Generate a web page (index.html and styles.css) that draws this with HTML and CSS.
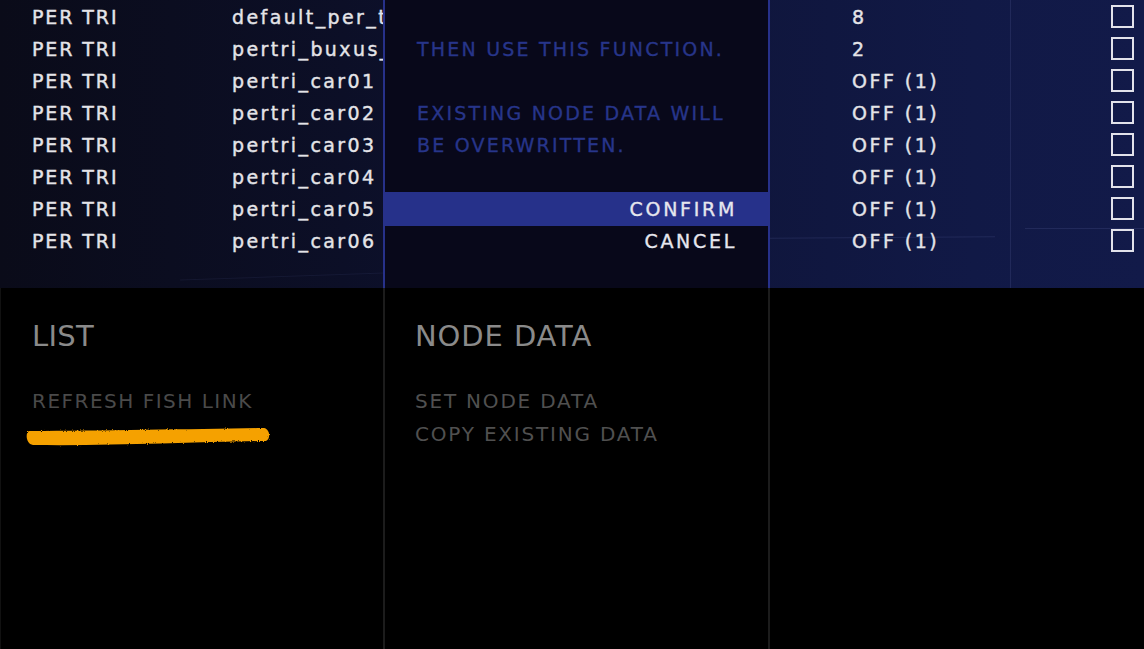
FILE: index.html
```html
<!DOCTYPE html>
<html>
<head>
<meta charset="utf-8">
<link rel="stylesheet" href="styles.css">
</head>
<body>
<div class="screen">
  <section class="top">
    <div class="deco deco-v"></div>
    <div class="deco deco-h1"></div>
    <div class="deco deco-h2"></div>
    <div class="deco deco-h3"></div>
    <div class="table">
      <div class="row"><span class="c1">PER TRI</span><span class="c2">default_per_tri</span><span class="c3">8</span><span class="box"></span></div>
      <div class="row"><span class="c1">PER TRI</span><span class="c2">pertri_buxus_01</span><span class="c3">2</span><span class="box"></span></div>
      <div class="row"><span class="c1">PER TRI</span><span class="c2">pertri_car01</span><span class="c3">OFF (1)</span><span class="box"></span></div>
      <div class="row"><span class="c1">PER TRI</span><span class="c2">pertri_car02</span><span class="c3">OFF (1)</span><span class="box"></span></div>
      <div class="row"><span class="c1">PER TRI</span><span class="c2">pertri_car03</span><span class="c3">OFF (1)</span><span class="box"></span></div>
      <div class="row"><span class="c1">PER TRI</span><span class="c2">pertri_car04</span><span class="c3">OFF (1)</span><span class="box"></span></div>
      <div class="row"><span class="c1">PER TRI</span><span class="c2">pertri_car05</span><span class="c3">OFF (1)</span><span class="box"></span></div>
      <div class="row"><span class="c1">PER TRI</span><span class="c2">pertri_car06</span><span class="c3">OFF (1)</span><span class="box"></span></div>
    </div>
    <div class="dialog">
      <div class="msg">
        <p>THEN USE THIS FUNCTION.</p>
        <p>&nbsp;</p>
        <p>EXISTING NODE DATA WILL</p>
        <p>BE OVERWRITTEN.</p>
      </div>
      <div class="opt confirm">CONFIRM</div>
      <div class="opt cancel">CANCEL</div>
    </div>
  </section>
  <section class="bottom">
    <div class="col">
      <h2 class="title">LIST</h2>
      <div class="items">
        <div class="item">REFRESH FISH LINK</div>
      </div>
      <svg class="stroke" width="250" height="22" viewBox="0 0 250 22">
        <defs>
          <filter id="rough" x="-5%" y="-30%" width="110%" height="160%">
            <feTurbulence type="fractalNoise" baseFrequency="0.9" numOctaves="2" seed="3"/>
            <feDisplacementMap in="SourceGraphic" scale="2.5"/>
          </filter>
        </defs>
        <path filter="url(#rough)" d="M5 4 C 80 4, 170 2, 240 1 C 246 2, 247 12, 242 14 C 170 15, 90 19, 9 18 C 2 17, 1 6, 5 4 Z" fill="#f5a100"/>
      </svg>
    </div>
    <div class="col">
      <h2 class="title">NODE DATA</h2>
      <div class="items">
        <div class="item">SET NODE DATA</div>
        <div class="item">COPY EXISTING DATA</div>
      </div>
    </div>
    <div class="col"></div>
  </section>
</div>
</body>
</html>
```
FILE: styles.css
```css
* { box-sizing: border-box; }
html, body { margin: 0; padding: 0; background: #000; }
body {
  width: 1144px;
  height: 649px;
  overflow: hidden;
  font-family: "DejaVu Sans", "Liberation Sans", sans-serif;
}
.screen { width: 1144px; height: 649px; display: flex; flex-direction: column; }

.top {
  position: relative;
  height: 288px;
  flex: none;
  background: linear-gradient(90deg, #0a0b19 0%, #0c0f27 30%, #0f153a 60%, #111946 85%, #121a49 100%);
  overflow: hidden;
}
.deco { position: absolute; background: rgba(90, 100, 160, 0.22); }
.deco-v { left: 1010px; top: 0; width: 1px; height: 288px; }
.deco-h1 { left: 770px; top: 237px; width: 225px; height: 1px; transform: rotate(-0.4deg); }
.deco-h2 { left: 1025px; top: 228px; width: 119px; height: 1px; }
.deco-h3 { left: 180px; top: 276px; width: 204px; height: 1px; transform: rotate(-2deg); background: rgba(90, 100, 160, 0.12); }

.table { padding-top: 1px; position: relative; }
.row {
  display: grid;
  grid-template-columns: 200px 620px 259px 23px;
  padding-left: 32px;
  height: 32px;
  align-items: center;
  color: #e4e4e8;
  font-size: 19px;
  -webkit-text-stroke: 0.4px #e4e4e8;
  white-space: nowrap;
}
.row .c1 { letter-spacing: 1.9px; }
.row .c2 { letter-spacing: 2.4px; }
.row .c3 { letter-spacing: 2.5px; }
.box {
  width: 23px;
  height: 23px;
  border: 2px solid #e2e2ea;
  margin-top: -2px;
}

.dialog {
  position: absolute;
  left: 383px;
  top: 0;
  width: 387px;
  height: 288px;
  background: #08081a;
  border-left: 2px solid #27318a;
  border-right: 2px solid #27318a;
  display: flex;
  flex-direction: column;
}
.msg {
  padding: 33px 0 0 32px;
  color: #27358a;
  font-size: 19px;
  -webkit-text-stroke: 0.35px #27358a;
  letter-spacing: 2.2px;
  line-height: 32px;
  white-space: nowrap;
}
.msg p { margin: 0; }
.opt {
  text-align: right;
  padding-right: 31px;
  color: #e6e6ee;
  font-size: 19px;
  -webkit-text-stroke: 0.35px #e6e6ee;
  letter-spacing: 2.7px;
}
.confirm {
  margin-top: 31px;
  height: 34px;
  line-height: 34px;
  background: #26318a;
}
.cancel { height: 32px; line-height: 30px; }

.bottom {
  flex: 1;
  display: grid;
  grid-template-columns: 383px 385px 1fr;
  background: #000;
}
.col {
  border-left: 2px solid #1c1c1c;
  padding: 30px 0 0 30px;
  position: relative;
}
.col:first-child { border-left: 1px solid #111; padding-left: 31px; }
.title {
  margin: 0;
  font-weight: normal;
  font-size: 29px;
  line-height: 36px;
  color: #8a8a8a;
  letter-spacing: 0.9px;
}
.col:first-child .title { letter-spacing: 0.3px; }
.items { margin-top: 31px; }
.item {
  font-size: 20px;
  line-height: 33px;
  color: #4a4a4a;
  letter-spacing: 1.5px;
}
.col:nth-child(2) .item { letter-spacing: 1.8px; color: #505050; }
.stroke { display: block; margin: 9px 0 0 -8px; }
```
